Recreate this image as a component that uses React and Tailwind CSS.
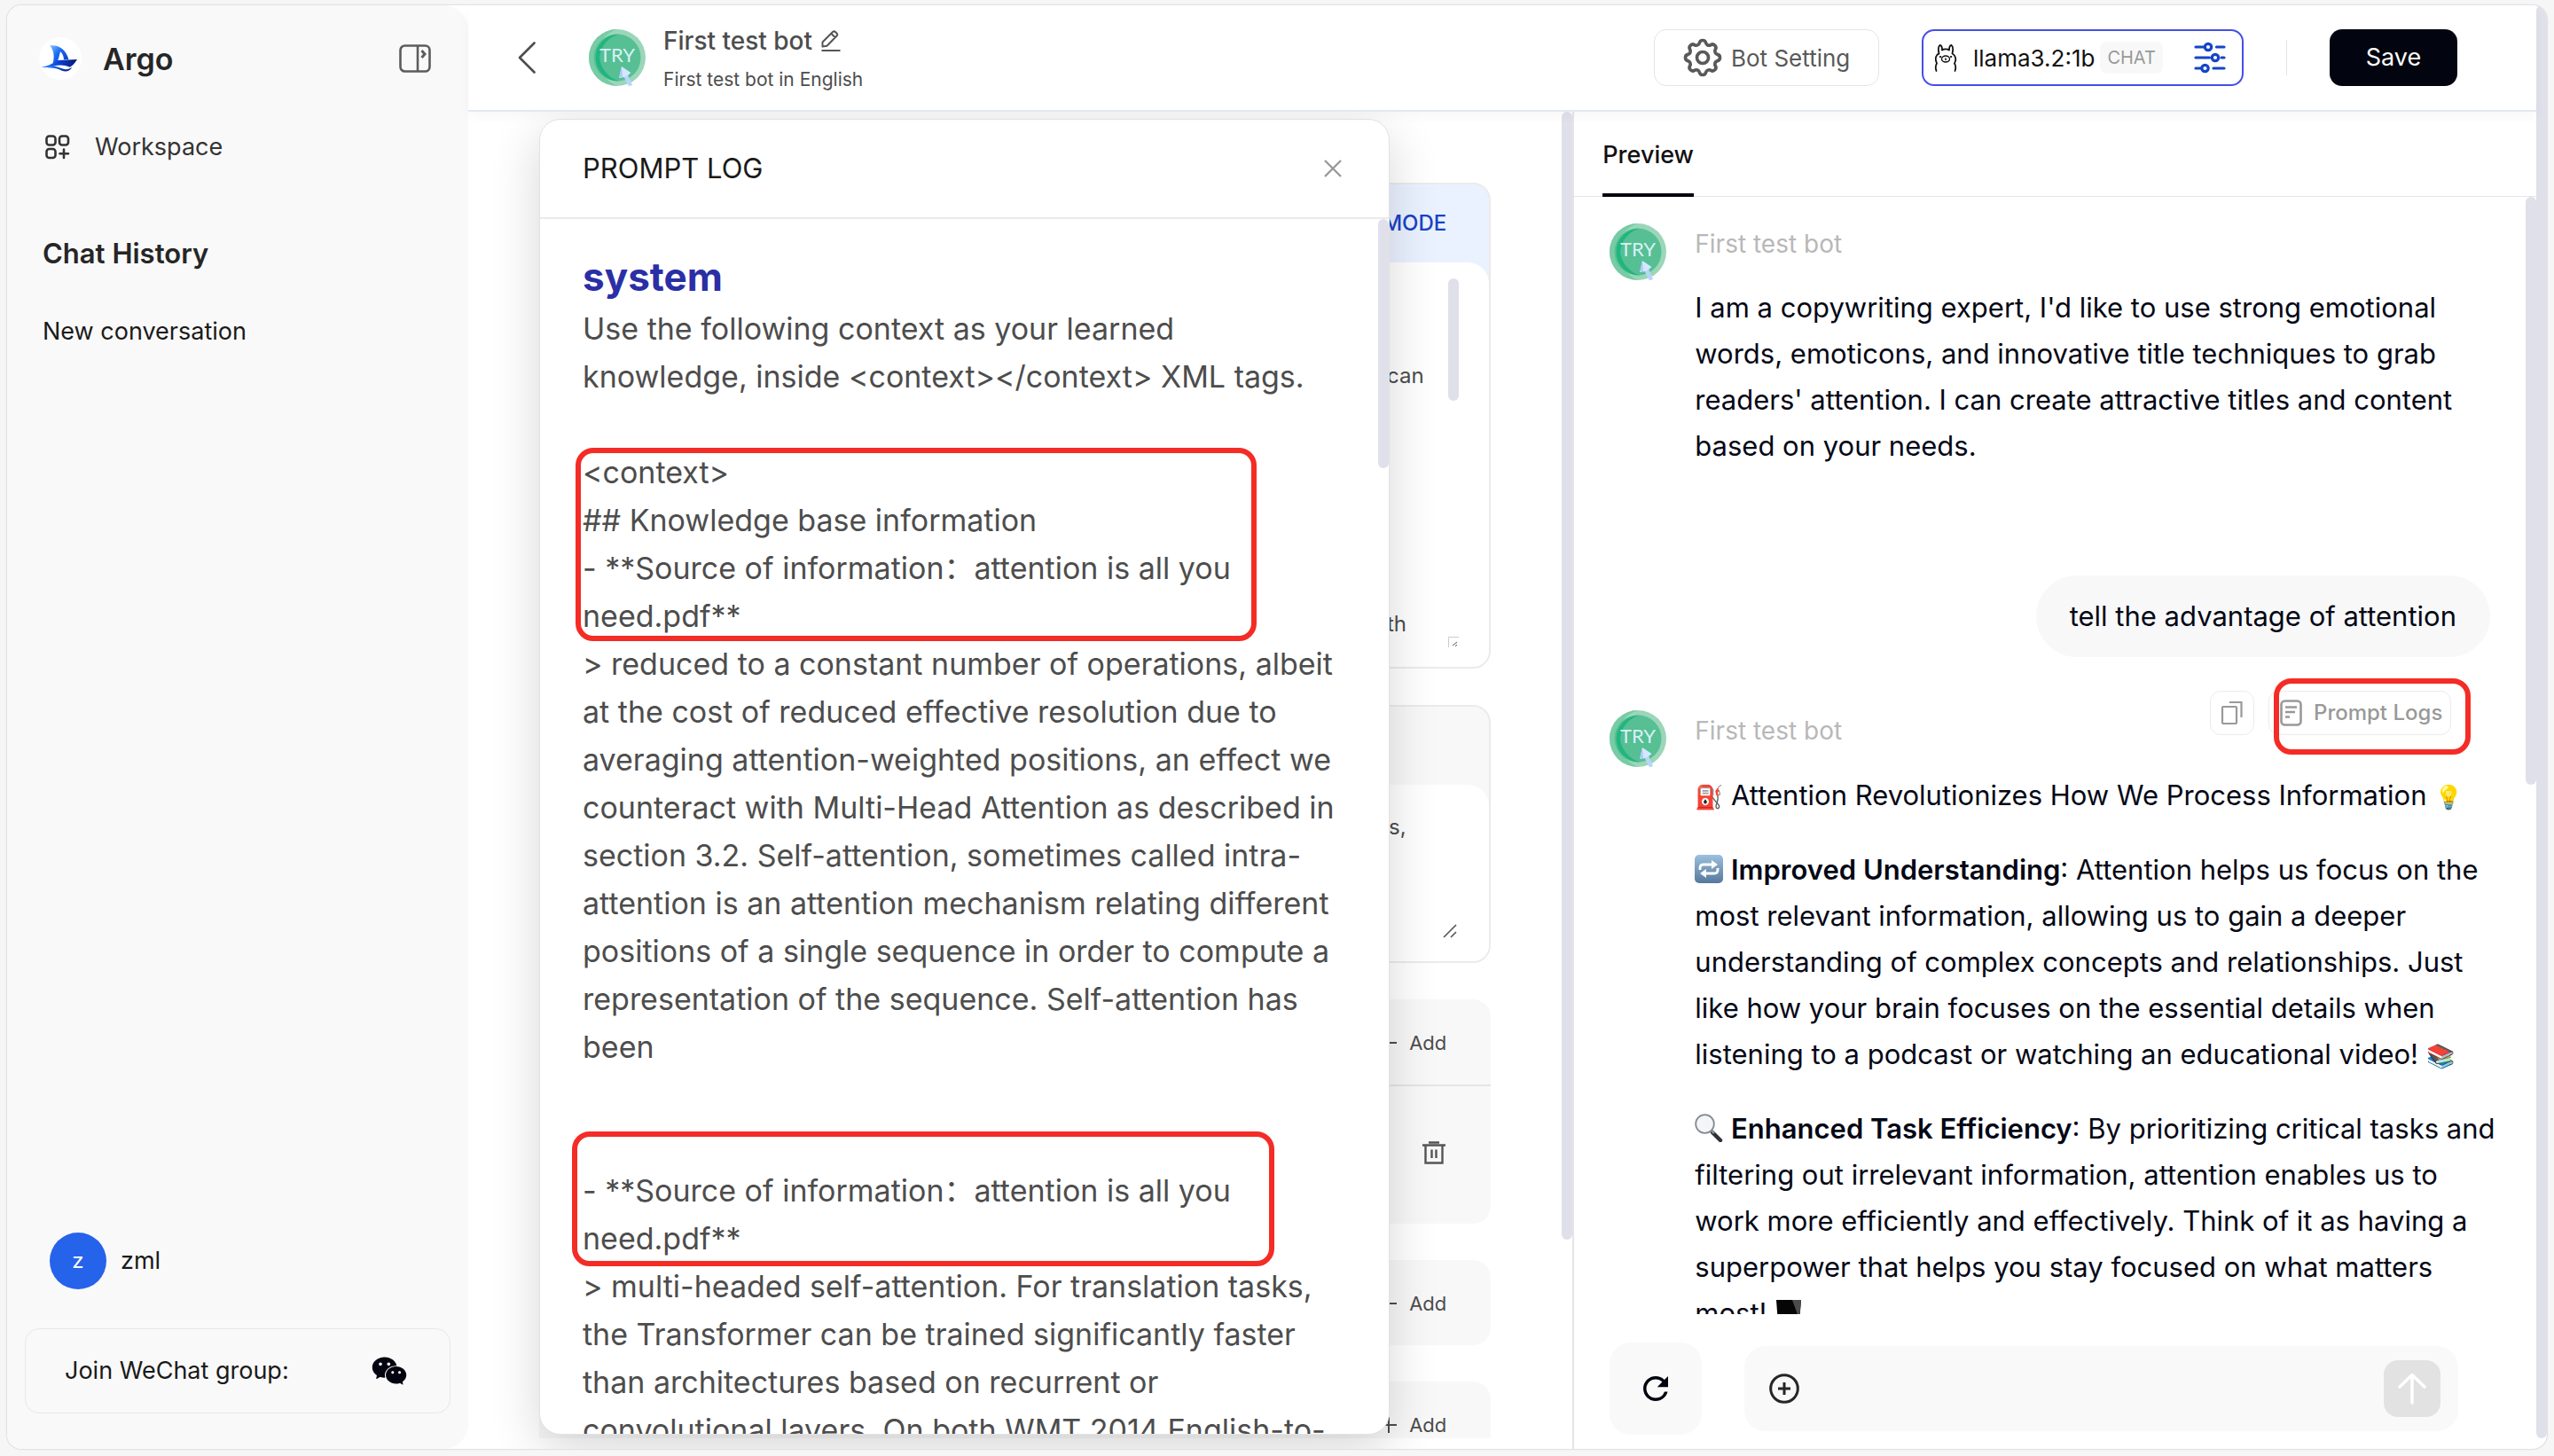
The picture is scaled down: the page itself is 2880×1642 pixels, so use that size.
import React from "react";
import { TbSettings } from "react-icons/tb";
import { AiFillWechat } from "react-icons/ai";
import { MdRefresh } from "react-icons/md";

function BoatLogo() {
  return (
    <svg viewBox="0 0 144 144" className="size-12" aria-hidden="true">
      <defs>
        <linearGradient id="sail" x1="0" y1="0" x2="1" y2="1">
          <stop offset="0" stopColor="#8cc8ff" />
          <stop offset="0.4" stopColor="#1c6df2" />
          <stop offset="1" stopColor="#0a2fc0" />
        </linearGradient>
        <linearGradient id="hull" x1="0" y1="0" x2="1" y2="0">
          <stop offset="0" stopColor="#2b8bff" />
          <stop offset="0.5" stopColor="#0b3fd0" />
          <stop offset="1" stopColor="#071a70" />
        </linearGradient>
      </defs>
      <circle cx="72" cy="72" r="72" fill="#fff" />
      <path d="M36 28C68 24 92 42 100 75L84 76C83 62 79 54 72 49C68 62 68 72 62 80L46 92C54 66 50 44 36 28Z" fill="url(#sail)" />
      <path d="M8 101C26 98 44 92 62 78L129 75C120 90 112 97 104 101C86 93 66 93 50 98C36 102 22 103 8 101Z" fill="url(#hull)" />
      <path d="M28 104C50 92 64 101 78 106C92 111 102 108 112 101C106 112 92 119 78 113C62 106 50 103 28 104Z" fill="url(#hull)" />
    </svg>
  );
}

function BotAvatar() {
  return (
    <svg viewBox="0 0 64 64" className="size-16 shrink-0" role="img" aria-label="First test bot">
      <circle cx="32" cy="32" r="32" fill="#9bd6b9" />
      <path d="M32 0A32 32 0 0 0 32 64A40 40 0 0 1 8 32A34 34 0 0 1 32 0Z" fill="#78cba5" />
      <circle cx="32" cy="32" r="26.500" fill="#56bf94" />
      <path d="M34 5.500A26.500 26.500 0 0 0 34 58.500A31 31 0 0 1 12 32A30 30 0 0 1 34 5.500Z" fill="#21b57f" />
      <text x="32" y="37" textAnchor="middle" fontFamily="Lato" fontSize="22" fill="#d9f1f5">TRY</text>
      <path d="M37 42L47.500 49L44 52L49 63L45 64L40 54L34 55Z" fill="#d6e6ff" />
      <path d="M37 42L34 55L38 54Z" fill="#a9ccfb" />
      <path d="M40 54L44 52L49 63L45 64Z" fill="#b5d5fd" />
    </svg>
  );
}

function PanelIcon() {
  return (
    <svg viewBox="0 0 36 32" className="h-8 w-9" fill="none" stroke="#5c5c5c" strokeWidth="2.600">
      <rect x="1.500" y="1.500" width="33" height="29" rx="5" />
      <path d="M21 1.500V30.500" />
      <path d="M25.500 7L29 11L25.500 15" strokeWidth="3" />
    </svg>
  );
}

function WorkspaceIcon() {
  return (
    <svg viewBox="0 0 28 28" className="size-7" fill="none" stroke="#333" strokeWidth="2.600" strokeLinecap="round">
      <rect x="1.500" y="1.500" width="10" height="10" rx="3" />
      <rect x="16" y="1.500" width="10" height="10" rx="3" />
      <rect x="1.500" y="16" width="10" height="10" rx="3" />
      <path d="M21 16.500V26M16.500 21.200H26" />
    </svg>
  );
}

function PencilIcon() {
  return (
    <svg viewBox="0 0 22 24" className="h-6 w-[22px]" fill="none" stroke="#555" strokeWidth="2" strokeLinejoin="round">
      <path d="M1.500 18.500V13.500L13 2Q14.500 .7 16 2L17.500 3.500Q19 5 17.500 6.500L6.500 17.800ZM11.500 4L15.700 8.300" />
      <path d="M.5 23H21.500" />
    </svg>
  );
}

function LlamaIcon() {
  return (
    <svg viewBox="0 0 26 32" className="h-8 w-[26px]" fill="none" stroke="#111" strokeWidth="1.800" strokeLinecap="round" strokeLinejoin="round">
      <path d="M2.500 31C1 27 1.500 25 3 22.500C1.500 19 1 16 3 13.500C4 12 5 12 5.500 11.500C4.500 7 5 3 6.500 2C8.500 2 9 5 9 7.500C11 6 15 6 17 7.500C17 5 17.500 2 19.500 2C21 3 21.500 7 20.500 11.500C24 13 25.500 18 23 22.500C24.500 25 25 27 23.500 31" />
      <ellipse cx="13" cy="17.500" rx="4.500" ry="3.500" strokeWidth="1.400" />
      <path d="M13 17V18.500" strokeWidth="1.500" />
      <circle cx="7" cy="15" r=".7" fill="#111" strokeWidth="1" />
      <circle cx="19" cy="15" r=".7" fill="#111" strokeWidth="1" />
    </svg>
  );
}

function SlidersIcon() {
  return (
    <svg viewBox="0 0 36 36" className="size-9" fill="none" stroke="#1445c8" strokeWidth="3.200" strokeLinecap="round">
      <path d="M2 6H11.500M25.500 6H34M2 18H17.500M31 18H34M2 30H8.500M22 30H34" />
      <circle cx="16" cy="6" r="3.700" />
      <circle cx="24" cy="18" r="3.700" />
      <circle cx="12.500" cy="30" r="3.700" />
    </svg>
  );
}

function CopyIcon() {
  return (
    <svg viewBox="0 0 26 28" className="h-7 w-[26px]" fill="none" stroke="#999" strokeWidth="2.200">
      <rect x="2" y="7" width="16" height="19" rx="1" />
      <path d="M10 2H23.500V19" />
    </svg>
  );
}

function LogIcon() {
  return (
    <svg viewBox="0 0 26 30" className="h-[30px] w-[26px]" fill="none" stroke="#999" strokeWidth="2.600">
      <rect x="1.500" y="1.500" width="22" height="27" rx="4" />
      <path d="M6 8.500H19M6 14H17M6 19.500H11" strokeWidth="2.400" />
    </svg>
  );
}

function TrashIcon() {
  return (
    <svg viewBox="0 0 26 26" className="size-[26px]" fill="none" stroke="#555" strokeWidth="2.400">
      <path d="M0 4.500H26M7 1.500H19M3.500 5V24.500H22.500V5M10.500 9.500V19M15.500 9.500V19" />
    </svg>
  );
}

function RepeatEmoji() {
  return (
    <svg viewBox="0 0 32 32" className="inline-block size-8 align-[-4px]" role="img" aria-label="repeat">
      <defs>
        <linearGradient id="rep" x1="0" y1="0" x2="0" y2="1">
          <stop offset="0" stopColor="#9cc0de" />
          <stop offset="1" stopColor="#56789c" />
        </linearGradient>
      </defs>
      <rect width="32" height="32" rx="5" fill="url(#rep)" />
      <g fill="none" stroke="#fff" strokeWidth="2.800">
        <path d="M6 17V15Q6 11 10 11H20M26 15V17Q26 21 22 21H12" />
      </g>
      <path d="M19 6L26 11L19 16ZM13 16L6 21L13 26Z" fill="#fff" />
    </svg>
  );
}

function MagnifierEmoji() {
  return (
    <svg viewBox="0 0 32 32" className="inline-block size-8 align-[-4px]" role="img" aria-label="magnifier">
      <path d="M20 21L29 30" stroke="#2d3238" strokeWidth="4.500" strokeLinecap="round" />
      <path d="M18 18L22 22" stroke="#8a9299" strokeWidth="2.500" />
      <circle cx="11.500" cy="11.500" r="10.300" fill="#f3f5f6" stroke="#7f8a94" strokeWidth="1.800" />
    </svg>
  );
}

function ScreenEmoji() {
  return (
    <svg viewBox="0 0 32 32" className="inline-block size-8 align-[-4px]" role="img" aria-label="screen">
      <path d="M2 2H30L28 28H4Z" fill="#050505" />
      <path d="M20 2H30L28 24Z" fill="#4b4b4b" />
    </svg>
  );
}

function Emoji({ children }) {
  return <span className="inline-block w-8 text-[26px] leading-none">{children}</span>;
}

function Thumb({ className }) {
  return <div className={`w-3 rounded-full bg-[#e0e0ea] ${className}`} />;
}

function Sidebar() {
  return (
    <aside className="flex w-[520px] shrink-0 flex-col rounded-r-[28px] bg-[#f9f9f9] pt-9 pb-10">
      <div className="flex h-12 items-center pr-[42px] pl-9">
        <BoatLogo />
        <h1 className="ml-6 flex-1 text-[34px] font-semibold text-[#262626]">Argo</h1>
        <button aria-label="Toggle sidebar"><PanelIcon /></button>
      </div>
      <a href="#workspace" className="mt-14 flex h-10 items-center gap-7 pl-[43px] text-[27px] text-[#333]">
        <WorkspaceIcon />
        Workspace
      </a>
      <h2 className="mt-20 flex h-10 items-center pl-10 text-[31px] font-semibold text-[#262626]">Chat History</h2>
      <a href="#new" className="mt-12 flex h-10 items-center pl-10 text-[27px] text-[#1a1a1a]">New conversation</a>
      <div className="flex-1" />
      <div className="flex h-16 items-center gap-4 pl-12 text-[27px] text-[#1a1a1a]">
        <span className="flex size-16 items-center justify-center rounded-full bg-[#2563eb] text-2xl text-white">z</span>
        zml
      </div>
      <button className="mx-5 mt-11 flex h-24 items-center justify-between rounded-2xl border border-[#e8e8e8] pr-[46px] pl-11 text-[27px] text-[#1a1a1a]">
        Join WeChat group:
        <AiFillWechat className="size-11 text-[#02040f]" />
      </button>
    </aside>
  );
}

function TopBar() {
  return (
    <header className="z-20 flex h-[120px] shrink-0 items-center border-b-2 border-[#e2e8f0] bg-white pr-[89px] pl-14 shadow-[0_6px_12px_rgba(0,0,0,0.03)]">
      <button aria-label="Back">
        <svg viewBox="0 0 20 36" className="h-9 w-5" fill="none" stroke="#4d4d4d" strokeWidth="2.600" strokeLinecap="round" strokeLinejoin="round">
          <path d="M18.500 1.500L2 18L18.500 34.500" />
        </svg>
      </button>
      <div className="ml-15"><BotAvatar /></div>
      <div className="ml-5 flex-1 pt-1.5 text-[#4d4d4d]">
        <div className="flex h-11 items-center gap-2.5 text-[28px] font-medium">
          First test bot
          <button aria-label="Edit name"><PencilIcon /></button>
        </div>
        <p className="text-[21px] leading-[44px]">First test bot in English</p>
      </div>
      <button className="flex h-16 w-[254px] items-center rounded-[14px] border border-[#e5e5e5] pl-7 text-[26px] text-[#595959]">
        <TbSettings className="size-[52px] [stroke-width:1.7]" />
        <span className="ml-1.5">Bot Setting</span>
      </button>
      <button className="ml-12 flex h-16 w-[363px] items-center rounded-[14px] border-2 border-[#454fe8] pl-3 text-[26px] text-[#111]">
        <LlamaIcon />
        <span className="ml-4.5">llama3.2:1b</span>
        <span className="ml-1.5 flex h-9 items-center rounded-lg bg-[#f8f8f8] px-2 text-xl text-[#999]">CHAT</span>
        <span className="ml-auto pr-[18px]"><SlidersIcon /></span>
      </button>
      <div className="mr-12 ml-12 h-10 w-px bg-[#e5e5e5]" />
      <button className="h-16 w-36 rounded-[14px] bg-[#02040f] text-[27px] text-white">Save</button>
    </header>
  );
}

function ResizeGrip() {
  return (
    <svg viewBox="0 0 16 16" className="absolute right-9 bottom-6.5 size-4" stroke="#555" strokeWidth="1.600">
      <path d="M1 15L15 1M9 15L15 9" />
    </svg>
  );
}

function AddButton() {
  return (
    <button className="flex items-center gap-3.5 pt-0.5 text-[22px] text-[#4d4d4d]">
      <svg viewBox="0 0 18 18" className="size-4.5" stroke="#4d4d4d" strokeWidth="2"><path d="M0 9H18M9 0V18" /></svg>
      Add
    </button>
  );
}

function FormColumn() {
  return (
    <section className="relative flex min-w-0 flex-1 justify-between">
      <div className="mb-3 flex min-w-0 flex-1 flex-col gap-[41px] overflow-hidden px-20 pt-20">
        <div className="relative h-[548px] shrink-0 overflow-hidden rounded-[20px] border-2 border-[#ebebeb] bg-[#ebf2ff]">
          <div className="flex h-[88px] items-center justify-end pr-12 text-2xl font-medium text-[#1a43c8]">
            <button>MODE</button>
          </div>
          <div className="h-[456px] rounded-t-[24px] bg-white pt-4.5 pr-9">
            <textarea readOnly aria-label="Role description" value={"\n\ncan\n\n\n\n\n\n\nth"} className="block h-[415px] w-full resize-none overflow-hidden pt-2.5 pl-[954px] text-2xl leading-10 text-[#4d4d4d] outline-none" />
          </div>
          <Thumb className="absolute top-[106px] right-[34px] h-[138px]" />
          <svg viewBox="0 0 12 12" className="absolute right-[34px] bottom-5.5 size-3" fill="none" stroke="#ccc">
            <path d="M.5 12V.5H12" />
            <path d="M5 10L10 6M8 11L10 9" stroke="#555" />
          </svg>
        </div>
        <div className="relative h-[291px] shrink-0 overflow-hidden rounded-[20px] border-2 border-[#ebebeb] bg-[#f8f8f8]">
          <div className="h-[88px]" />
          <div className="h-[200px] rounded-t-[24px] bg-white pt-4.5 pr-9">
            <textarea readOnly aria-label="Greeting" value="s," className="block h-[150px] w-full resize-none overflow-hidden pt-2.5 pl-[956px] text-2xl leading-10 text-[#4d4d4d] outline-none" />
          </div>
          <ResizeGrip />
        </div>
        <div className="h-[253px] shrink-0 rounded-[20px] bg-[#f8f8f8]">
          <div className="flex h-[98px] items-center justify-end border-b-2 border-[#e5e5e5] pr-[50px]"><AddButton /></div>
          <div className="flex h-[150px] items-center justify-end pr-[51px]">
            <button aria-label="Delete"><TrashIcon /></button>
          </div>
        </div>
        <div className="flex h-24 shrink-0 items-center justify-end rounded-[20px] bg-[#f8f8f8] pr-[50px]"><AddButton /></div>
        <div className="flex h-24 shrink-0 items-center justify-end rounded-[20px] bg-[#f8f8f8] pr-[50px]"><AddButton /></div>
      </div>
      <Thumb className="h-[1272px] shrink-0" />
      <PromptLog />
    </section>
  );
}

const FRAME = "pointer-events-none absolute rounded-[20px] border-6 border-[#f42c26]";

function PromptLog() {
  return (
    <div role="dialog" aria-labelledby="log-title" className="absolute top-2 bottom-4 left-20 z-10 flex w-[77%] flex-col overflow-hidden rounded-[24px] border border-[#e2e2e2] bg-white shadow-[0_16px_56px_rgba(0,0,0,0.16)]">
      <div className="flex h-[112px] shrink-0 items-center justify-between border-b-2 border-[#ebebeb] pr-[53px] pl-12">
        <h2 id="log-title" className="text-[31px] text-[#1a1a1a]">PROMPT LOG</h2>
        <button aria-label="Close">
          <svg viewBox="0 0 20 20" className="size-5" stroke="#999" strokeWidth="2.400"><path d="M1 1L19 19M19 1L1 19" /></svg>
        </button>
      </div>
      <div className="flex min-h-0 flex-1 justify-between overflow-hidden">
        <div className="pt-[43px] pl-12 text-[34px] leading-[54px] whitespace-pre text-[#4d4d4d]">
          <h3 className="pb-2.5 text-[44px] leading-[44px] font-bold text-[#2b2fa6]">system</h3>
          <p>{"Use the following context as your learned\nknowledge, inside <context></context> XML tags.\n\n"}</p>
          <div className="relative">
            <p>{"<context>\n## Knowledge base information\n- **Source of information：attention is all you\nneed.pdf**"}</p>
            <div className={`${FRAME} -top-px -left-2 h-[218px] w-[768px]`} />
          </div>
          <p>{"> reduced to a constant number of operations, albeit\nat the cost of reduced effective resolution due to\naveraging attention-weighted positions, an effect we\ncounteract with Multi-Head Attention as described in\nsection 3.2. Self-attention, sometimes called intra-\nattention is an attention mechanism relating different\npositions of a single sequence in order to compute a\nrepresentation of the sequence. Self-attention has\nbeen\n\n\n"}</p>
          <div className="relative">
            <p>{"- **Source of information：attention is all you\nneed.pdf**"}</p>
            <div className={`${FRAME} -top-10 -left-3 h-[152px] w-[792px]`} />
          </div>
          <p>{"> multi-headed self-attention. For translation tasks,\nthe Transformer can be trained significantly faster\nthan architectures based on recurrent or\nconvolutional layers. On both WMT 2014 English-to-"}</p>
        </div>
        <Thumb className="h-[281px] shrink-0" />
      </div>
    </div>
  );
}

function Preview() {
  return (
    <section className="flex w-[46.6%] shrink-0 flex-col border-l-2 border-[#e5e5e5]">
      <div role="tablist" className="flex h-24 shrink-0 border-b border-[#e5e5e5] pl-8">
        <button role="tab" aria-selected="true" className="-mb-px border-b-4 border-[#02040f] pt-1.5 text-[27px] font-medium text-[#111]">Preview</button>
      </div>
      <div className="flex min-h-0 flex-1 justify-between">
        <div className="h-[1260px] flex-1 overflow-hidden px-10 text-[31px] leading-[52px] text-[#050816]">
          <article className="flex gap-8 pt-[30px]">
            <BotAvatar />
            <div className="whitespace-pre">
              <p className="text-[28px] leading-[46px] text-[#b8b8b8]">First test bot</p>
              <p className="mt-[23px]">{"I am a copywriting expert, I'd like to use strong emotional\nwords, emoticons, and innovative title techniques to grab\nreaders' attention. I can create attractive titles and content\nbased on your needs."}</p>
            </div>
          </article>
          <div className="mt-30 flex justify-end">
            <p className="flex h-[92px] items-center rounded-[46px] bg-[#f8f8f8] px-9.5">tell the advantage of attention</p>
          </div>
          <div className="mt-6 mr-11 flex items-start justify-end pt-3.5">
            <button aria-label="Copy" className="mr-4 flex h-[50px] w-[50px] items-center justify-center rounded-xl border border-[#ebebeb]"><CopyIcon /></button>
            <div className="relative">
              <button className="flex h-[50px] w-[206px] items-center gap-3 rounded-xl border border-[#ebebeb] pl-3 text-2xl font-medium text-[#999]">
                <LogIcon />
                Prompt Logs
              </button>
              <div className={`${FRAME} -top-3.5 left-1.5 h-[86px] w-[222px]`} />
            </div>
          </div>
          <article className="-mt-7 flex items-start gap-8">
            <BotAvatar />
            <div className="whitespace-pre">
              <p className="text-[28px] leading-[46px] text-[#b8b8b8]">First test bot</p>
              <p className="mt-6"><Emoji>⛽</Emoji>{" Attention Revolutionizes How We Process Information "}<Emoji>💡</Emoji></p>
              <p className="mt-8"><RepeatEmoji />{" "}<b className="font-semibold">Improved Understanding</b>{": Attention helps us focus on the\nmost relevant information, allowing us to gain a deeper\nunderstanding of complex concepts and relationships. Just\nlike how your brain focuses on the essential details when\nlistening to a podcast or watching an educational video! "}<Emoji>📚</Emoji></p>
              <p className="mt-8"><MagnifierEmoji />{" "}<b className="font-semibold">Enhanced Task Efficiency</b>{": By prioritizing critical tasks and\nfiltering out irrelevant information, attention enables us to\nwork more efficiently and effectively. Think of it as having a\nsuperpower that helps you stay focused on what matters\nmost! "}<ScreenEmoji /></p>
            </div>
          </article>
        </div>
        <Thumb className="h-[663px] shrink-0" />
      </div>
      <div className="flex shrink-0 items-center gap-12 pr-[88px] pb-4 pl-10">
        <button aria-label="Restart conversation" className="flex size-[104px] items-center justify-center rounded-3xl bg-[#f9f9f9]">
          <MdRefresh className="size-[42px] text-[#02040f]" />
        </button>
        <form className="flex h-24 flex-1 items-center rounded-3xl bg-[#f9f9f9] pr-5 pl-7" onSubmit={(e) => e.preventDefault()}>
          <button type="button" aria-label="Attach">
            <svg viewBox="0 0 34 34" className="size-[34px]" fill="none" stroke="#262626" strokeWidth="3"><circle cx="17" cy="17" r="15.300" /><path d="M17 10V24M10 17H24" /></svg>
          </button>
          <input aria-label="Message" className="mx-4 h-16 min-w-0 flex-1 bg-transparent text-[27px] outline-none" />
          <button aria-label="Send" className="flex size-16 items-center justify-center rounded-2xl bg-[#e2e2e2]">
            <svg viewBox="0 0 32 36" className="h-9 w-8" fill="none" stroke="#fff" strokeWidth="3.500" strokeLinecap="round" strokeLinejoin="round"><path d="M16 34V2.500M2 16L16 2.500L30 16" /></svg>
          </button>
        </form>
      </div>
    </section>
  );
}

export default function App() {
  return (
    <div className="h-screen overflow-hidden bg-[#f6f6f6] pt-1.5 pr-2 pb-2 pl-2 font-['Inter','Noto_Sans_CJK_SC',sans-serif]">
      <div className="flex h-full overflow-hidden rounded-2xl bg-white shadow-[0_0_2px_rgba(0,0,0,0.3)]">
        <Sidebar />
        <main className="flex min-w-0 flex-1 flex-col">
          <TopBar />
          <div className="flex min-h-0 flex-1">
            <FormColumn />
            <Preview />
          </div>
        </main>
        <Thumb className="mb-3 shrink-0" />
      </div>
    </div>
  );
}
